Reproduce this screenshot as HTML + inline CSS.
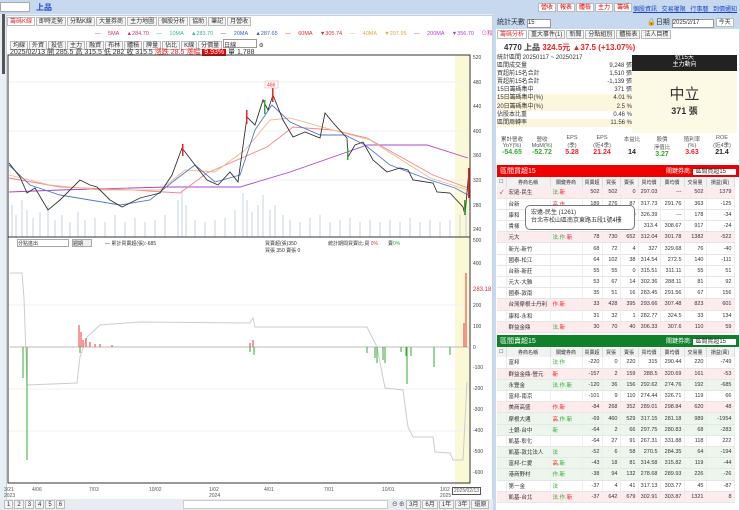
<!DOCTYPE html>
<html><head><meta charset="utf-8"><style>
*{margin:0;padding:0;box-sizing:border-box}
body{width:740px;height:510px;overflow:hidden;background:#fff;font-family:"Liberation Sans","Noto Sans CJK TC",sans-serif;font-size:7px;color:#333;position:relative}
.a{position:absolute}
.btn{display:inline-block;border:1px solid #bbb;background:#f4f4f4;padding:0 2px;height:9px;line-height:8px;margin-right:1px;font-size:6px}
table{border-collapse:collapse;width:100%;table-layout:fixed}
td{font-size:5.5px;height:11.2px;border-bottom:1px solid #e6e6e6;border-right:1px solid #eee;padding:0 2px;text-align:right;white-space:nowrap;overflow:hidden}
td:nth-child(2),td:nth-child(3){text-align:left}
tr.p td{background:#fdebee}tr.g td{background:#ecf6ec}
th{font-size:5px;font-weight:normal;background:#f2f2f2;border-right:1px solid #ddd;height:10px;white-space:nowrap;overflow:hidden}
</style></head><body>
<div class="a" style="left:0;top:0;width:740px;height:14px;background:#c7d9ef"></div>
<div class="a" style="left:0;top:2px;width:30px;height:10px;background:#fff;border:1px solid #aaa"></div>
<div class="a" style="left:36px;top:2px;color:#1a47c8;font-size:8px;font-weight:bold">上品</div>
<div class="a" style="left:538px;top:3px;font-size:6px">
<span class="btn" style="color:#d00;background:#fff">營收</span><span class="btn" style="color:#d00;background:#fff">報表</span><span class="btn" style="color:#d00;background:#fff">體檢</span><span class="btn" style="color:#d00;background:#fff">主力</span><span class="btn" style="color:#d00;background:#fff">籌碼</span></div>
<div class="a" style="left:633px;top:4px;font-size:6px;color:#1a47c8;text-decoration:underline;word-spacing:3px">個股資訊 交易權限 行事曆 到價通知</div>
<div class="a" style="left:0;top:14px;width:493px;height:496px;background:#e8eef6"></div>
<div class="a" style="left:2px;top:14px;width:3px;height:60px;background:#555"></div>
<div class="a" style="left:6px;top:15px;width:487px;height:495px;background:#fff;border:1px solid #c8d0dc"></div>
<div class="a" style="left:7px;top:17px;font-size:6px">
<span class="btn" style="color:#d33;background:#fff">籌碼K線</span><span class="btn">即時走勢</span><span class="btn">分點K線</span><span class="btn">大量券商</span><span class="btn">主力地圖</span><span class="btn">個股分析</span><span class="btn">協助</span><span class="btn">筆記</span><span class="btn">月營收</span></div>
<div class="a" style="left:95px;top:29px;font-size:5.5px;word-spacing:6px"><span style="color:#c36">— 5MA ▲284.70</span> <span style="color:#3b8">— 10MA ▲283.70</span> <span style="color:#36c">— 20MA ▲287.65</span> <span style="color:#c33">— 60MA ▼305.74</span> <span style="color:#da4">— 40MA ▼297.95</span> <span style="color:#a4c">— 200MA ▼356.70</span> <span style="color:#c4a">⊙和訂市區為最偏低</span></div>
<div class="a" style="left:10px;top:39px;font-size:5.5px"><span class="btn">均線</span><span class="btn">外資</span><span class="btn">投信</span><span class="btn">主力</span><span class="btn">融資</span><span class="btn">布林</span><span class="btn">體積</span><span class="btn">牌量</span><span class="btn">佔比</span><span class="btn">K線</span><span class="btn">分價量</span><span style="display:inline-block;width:34px;height:9px;border:1px solid #999;background:#fff;font-size:6px">日線</span> ⚙</div>
<div class="a" style="left:10px;top:47px;font-size:7px">2025/02/13 開 285.5 高 315.5 低 282 收 315.5 <span style="color:#e22">漲跌 28.5 漲幅 <span style="background:#e00;color:#fff;padding:0 2px">9.93%</span></span> 量 1,788</div>
<div class="a" style="left:455px;top:55px;width:15px;height:430px;background:#fbf8d8"></div>
<svg class="a" style="left:0;top:0" width="493" height="500">
<g stroke="#f0f0f0"><path d="M8 82H470M8 131H470M8 180H470M8 305H470M8 389H470M8 431H470"/></g>
<g stroke="#c5d3e3"><path d="M12 237V205M16 237V215M22 237V200M27 237V210M33 237V218M40 237V212M48 237V205M55 237V220M62 237V215M70 237V222M78 237V212M85 237V220M95 237V218M105 237V222M115 237V215M125 237V222M135 237V218M145 237V222M155 237V220M165 237V215M178 237V200M182 237V190M186 237V205M195 237V220M205 237V222M215 237V220M225 237V218M235 237V210M243 237V193M247 237V200M252 237V212M258 237V205M263 237V195M270 237V210M275 237V205M283 237V215M290 237V220M300 237V222M310 237V218M320 237V215M330 237V222M340 237V220M350 237V218M360 237V222M370 237V220M380 237V222M390 237V220M400 237V222M410 237V218M420 237V222M430 237V220M440 237V222M450 237V220M460 237V215M466 237V210"/></g>
<g fill="none" stroke-width="0.9">
<polyline stroke="#a4c" points="9,192 60,190 167,187 240,187 290,172 333,157 367,145 427,145 468,158"/>
<polyline stroke="#e88" points="9,178 60,187 133,190 180,193 207,173 267,147 293,127 333,130 367,138 433,175 468,188"/>
<polyline stroke="#eb8" points="9,175 50,185 100,190 160,190 185,170 215,172 245,150 270,120 290,118 340,132 370,140 430,178 468,190"/>
<polyline stroke="#57c" points="9,165 30,185 60,195 90,200 120,205 150,200 175,180 195,165 215,182 240,175 255,130 272,105 290,122 320,135 345,135 365,145 390,165 430,180 455,188 468,195"/>
<polyline stroke="#333" points="9,163 20,177 27,193 35,188 48,210 60,200 80,180 90,185 97,187 110,200 122,207 140,198 160,193 172,175 182,148 195,165 207,180 218,185 230,172 238,182 247,117 255,125 263,100 268,110 273,95 283,120 293,137 305,132 320,138 325,113 335,125 347,138 348,157 355,145 363,142 373,160 387,172 400,168 408,170 413,180 433,183 437,192 450,193 463,207 465,215 469,170"/>
</g>
<g fill="#e22"><rect x="272" y="88" width="1.5" height="14"/><rect x="246" y="110" width="1.5" height="14"/><rect x="182" y="144" width="1.5" height="12"/><rect x="468" y="168" width="1.5" height="30"/></g>
<g fill="#3a3"><rect x="264" y="100" width="1.5" height="14"/><rect x="347" y="148" width="1.5" height="12"/><rect x="464" y="200" width="1.5" height="14"/></g>
<rect x="265" y="81" width="13" height="7" fill="#fff" stroke="#e99" stroke-width="0.5"/>
<text x="267" y="86.5" font-size="5" fill="#e22">466</text>
<line x1="8" y1="237" x2="470" y2="237" stroke="#333"/>
<rect x="8" y="55" width="462" height="428" fill="none" stroke="#333"/>
<g font-size="5" fill="#444"><text x="473" y="59">520</text><text x="473" y="84">480</text><text x="473" y="108">440</text><text x="473" y="133">400</text><text x="473" y="157">360</text><text x="473" y="182">320</text><text x="473" y="207">280</text><text x="473" y="231">240</text>
<text x="473" y="242">500</text><text x="473" y="265">400</text><text x="473" y="307">200</text><text x="473" y="328">100</text><text x="473" y="349">0</text><text x="473" y="369">-100</text><text x="473" y="390">-200</text><text x="473" y="411">-300</text><text x="473" y="432">-400</text><text x="473" y="453">-500</text><text x="473" y="474">-600</text></g>
<text x="473" y="291" font-size="6" fill="#c33">283.18</text>
<line x1="10" y1="347" x2="470" y2="347" stroke="#bbb"/>
<polyline fill="none" stroke="#ccc" points="10,273 22,273 24,298 27,385 77,383 80,357 87,337 100,325 140,322 250,323 253,318 255,327 367,327 377,347 385,388 403,390 408,427 413,437 433,437 435,452 450,453 453,460 463,460 467,382"/>
<g stroke="#e33"><path d="M79 347V325M81 347V332M83 347V340M86 347V338M90 347V342M95 347V344M100 347V344M112 347V345M250 347V343M253 347V340M466 347V273M464 347V323"/></g>
<g stroke="#3a3"><path d="M27 347V460M23 347V378M80 347V353M250 347V352M254 347V355M367 347V353M375 347V358M377 347V363M383 347V360M385 347V363M401 347V352M406 347V356M407 347V384M411 347V356M434 347V367M450 347V355"/></g>
</svg>
<div class="a" style="left:17px;top:239px;width:52px;height:8px;border:1px solid #aaa;font-size:5px">分點進出</div>
<div class="a" style="left:72px;top:239px;width:20px;height:8px;border:1px solid #aaa;background:#eee;font-size:5px">週期</div>
<div class="a" style="left:105px;top:240px;font-size:5px">— 累計買賣超(張):-685</div>
<div class="a" style="left:265px;top:240px;font-size:5px">買賣超(張)350<br>買張 350 賣張 0</div>
<div class="a" style="left:328px;top:240px;font-size:5px">統計期間買賣比:買 <span style="color:#e33">0%</span>　　賣<span style="color:#3a3">0%</span></div>
<div class="a" style="left:4px;top:487px;font-size:5px;width:490px;color:#555">
<span class="a" style="left:0">3/21<br>2023</span><span class="a" style="left:28px">4/06</span><span class="a" style="left:85px">7/03</span><span class="a" style="left:145px">10/02</span><span class="a" style="left:205px">1/02<br>2024</span><span class="a" style="left:260px">4/01</span><span class="a" style="left:320px">7/01</span><span class="a" style="left:378px">10/01</span><span class="a" style="left:436px">1/02<br>2025</span><span class="a" style="left:448px;border:1px solid #555;background:#fff;padding:0 1px">2025/02/13</span></div>
<div class="a" style="left:0;top:499px;width:493px;height:11px;background:#e8ecf2"></div>
<div class="a" style="left:4px;top:500px;font-size:5.5px"><span class="btn">1</span><span class="btn">2</span><span class="btn">3</span><span class="btn">4</span><span class="btn">5</span><span class="btn">6</span></div>
<div class="a" style="left:183px;top:500px;width:205px;height:9px;background:#fff;border:1px solid #ccc"></div>
<div class="a" style="left:392px;top:500px;font-size:5.5px">⊖ ⊕ <span class="btn">3月</span><span class="btn">6月</span><span class="btn">1年</span><span class="btn">3年</span><span class="btn">還原</span></div>
<div class="a" style="left:493px;top:14px;width:247px;height:496px;background:#c7d9ef"></div>
<div class="a" style="left:497px;top:17px;font-size:7px;color:#234">統計天數 <span style="display:inline-block;width:24px;height:9px;background:#fff;border:1px solid #999;font-size:6px">15</span></div>
<div class="a" style="left:647px;top:17px;font-size:7px">🔒日期 <span style="display:inline-block;width:42px;height:9px;background:#fff;border:1px solid #999;font-size:6px">2025/2/17</span> <span class="btn" style="background:#fff">今天</span></div>
<div class="a" style="left:496px;top:29px;width:243px;height:481px;background:#fff"></div>
<div class="a" style="left:497px;top:30px;font-size:6px"><span class="btn" style="color:#d33;background:#fff">籌碼分析</span><span class="btn">重大事件(1)</span><span class="btn">新聞</span><span class="btn">分點組別</span><span class="btn">體檢表</span><span class="btn">法人目標</span></div>
<div class="a" style="left:504px;top:42px;font-size:8px;font-weight:bold">4770 上品 <span style="color:#e22">324.5元 ▲37.5 (+13.07%)</span></div>
<div class="a" style="left:497px;top:54px;width:135px;font-size:6px;line-height:8.1px">
<div>統計區間 20250117 ~ 20250217</div>
<div>區間成交量<span style="float:right">9,248 張</span></div>
<div>買超前15名合計<span style="float:right">1,510 張</span></div>
<div>賣超前15名合計<span style="float:right">-1,139 張</span></div>
<div>15日籌碼集中<span style="float:right">371 張</span></div>
<div style="background:#fcf6dc">15日籌碼集中(%)<span style="float:right">4.01 %</span></div>
<div style="background:#fcf6dc">20日籌碼集中(%)<span style="float:right">2.5 %</span></div>
<div>佔股本比重<span style="float:right">0.46 %</span></div>
<div style="background:#fcf6dc">區間周轉率<span style="float:right">11.56 %</span></div></div>
<div class="a" style="left:632px;top:55px;width:105px;height:16px;background:#222;color:#fff;text-align:center;font-size:6px;line-height:7px">近15天<br>主力動向</div>
<div class="a" style="left:632px;top:71px;width:105px;height:62px;background:#fcf9e4;text-align:center;padding-top:12px"><div style="font-size:15px;color:#333">中立</div><div style="font-size:9px;font-weight:bold">371 張</div></div>
<div class="a" style="left:497px;top:135px;width:240px;font-size:5.5px;display:flex;text-align:center;color:#555">
<div style="flex:1">累計營收<br>YoY(%)<br><b style="color:#3a3;font-size:7px">-54.65</b></div><div style="flex:1">營收<br>MoM(%)<br><b style="color:#3a3;font-size:7px">-52.72</b></div><div style="flex:1">EPS<br>(季)<br><b style="color:#e22;font-size:7px">5.28</b></div><div style="flex:1">EPS<br>(近4季)<br><b style="color:#e22;font-size:7px">21.24</b></div><div style="flex:1">本益比<br><br><b style="color:#222;font-size:7px">14</b></div><div style="flex:1">股價<br>淨值比<br><b style="color:#3a3;font-size:7px">3.27</b></div><div style="flex:1">殖利率<br>(%)<br><b style="color:#e22;font-size:7px">3.63</b></div><div style="flex:1">ROE<br>(近4季)<br><b style="color:#222;font-size:7px">21.4</b></div></div>
<div class="a" style="left:497px;top:165px;width:242px;height:12px;background:#e00;color:#fff;font-size:7px;padding:1px 3px">區間買超15<span style="float:right;font-size:6px">關鍵券商: <span style="background:#fff;color:#333;padding:0 10px 0 2px">區間買超15</span></span></div>
<div class="a" style="left:497px;top:177px;width:237px">
<table><colgroup><col style="width:9px"><col style="width:44px"><col style="width:32px"><col style="width:20px"><col style="width:18px"><col style="width:18px"><col style="width:22px"><col style="width:24px"><col style="width:22px"><col style="width:28px"></colgroup>
<tr><th>☐</th><th>券商名稱</th><th>關鍵券商</th><th>買賣超</th><th>買張</th><th>賣張</th><th>買均價</th><th>賣均價</th><th>交易量</th><th>損益(萬)</th></tr>
<tr class="p"><td>✓</td><td>宏遠-民生</td><td style="color:#3a3">法.<span style="color:#e22">新</span></td><td>502</td><td>502</td><td>0</td><td>297.03</td><td>---</td><td>502</td><td>1379</td></tr>
<tr><td></td><td>台新</td><td style="color:#e22">高.市</td><td>189</td><td>276</td><td>87</td><td>317.73</td><td>291.76</td><td>363</td><td>-125</td></tr>
<tr><td></td><td>康和</td><td></td><td>178</td><td>178</td><td>0</td><td>326.39</td><td>---</td><td>178</td><td>-34</td></tr>
<tr><td></td><td>貴樣</td><td></td><td>87</td><td>502</td><td>87</td><td>313.4</td><td>308.67</td><td>917</td><td>-24</td></tr>
<tr class="p"><td></td><td>元大</td><td style="color:#3a3">法.作.<span style="color:#e22">新</span></td><td>78</td><td>730</td><td>652</td><td>312.04</td><td>301.78</td><td>1382</td><td>-522</td></tr>
<tr><td></td><td>新光-新竹</td><td></td><td>68</td><td>72</td><td>4</td><td>327</td><td>329.68</td><td>76</td><td>-40</td></tr>
<tr><td></td><td>國泰-松江</td><td></td><td>64</td><td>102</td><td>38</td><td>314.54</td><td>272.5</td><td>140</td><td>-111</td></tr>
<tr><td></td><td>台新-新莊</td><td></td><td>55</td><td>55</td><td>0</td><td>315.51</td><td>311.11</td><td>55</td><td>51</td></tr>
<tr><td></td><td>元大-大雅</td><td></td><td>53</td><td>67</td><td>14</td><td>302.36</td><td>288.11</td><td>81</td><td>92</td></tr>
<tr><td></td><td>國泰-敦南</td><td></td><td>35</td><td>51</td><td>16</td><td>283.45</td><td>291.56</td><td>67</td><td>156</td></tr>
<tr class="p"><td></td><td>台灣摩根士丹利</td><td style="color:#e22">作.新</td><td>33</td><td>428</td><td>395</td><td>293.66</td><td>307.48</td><td>823</td><td>601</td></tr>
<tr><td></td><td>康和-永和</td><td></td><td>31</td><td>32</td><td>1</td><td>282.77</td><td>324.5</td><td>33</td><td>134</td></tr>
<tr class="p"><td></td><td>群益金鼎</td><td style="color:#3a3">法.<span style="color:#e22">新</span></td><td>30</td><td>70</td><td>40</td><td>306.33</td><td>307.6</td><td>110</td><td>59</td></tr></table></div>
<div class="a" style="left:525px;top:205px;width:110px;height:25px;background:#fff;border:1px solid #777;border-radius:5px;font-size:6px;padding:3px 5px;line-height:8px">宏遠-民生 (1261)<br>台北市松山區南京東路五段1號4樓</div>
<div class="a" style="left:497px;top:335px;width:242px;height:12px;background:#10802a;color:#fff;font-size:7px;padding:1px 3px">區間賣超15<span style="float:right;font-size:6px">關鍵券商: <span style="background:#fff;color:#333;padding:0 10px 0 2px">區間賣超15</span></span></div>
<div class="a" style="left:497px;top:347px;width:237px">
<table><colgroup><col style="width:9px"><col style="width:44px"><col style="width:32px"><col style="width:20px"><col style="width:18px"><col style="width:18px"><col style="width:22px"><col style="width:24px"><col style="width:22px"><col style="width:28px"></colgroup>
<tr><th>☐</th><th>券商名稱</th><th>關鍵券商</th><th>買賣超</th><th>買張</th><th>賣張</th><th>買均價</th><th>賣均價</th><th>交易量</th><th>損益(萬)</th></tr>
<tr><td></td><td>富邦</td><td style="color:#3a3">法.作</td><td>-220</td><td>0</td><td>220</td><td>315</td><td>290.44</td><td>220</td><td>-749</td></tr>
<tr class="p"><td></td><td>群益金鼎-營元</td><td style="color:#e22">新</td><td>-157</td><td>2</td><td>159</td><td>288.5</td><td>320.69</td><td>161</td><td>-53</td></tr>
<tr class="g"><td></td><td>永豐金</td><td style="color:#3a3">法.作.新</td><td>-120</td><td>36</td><td>156</td><td>292.62</td><td>274.76</td><td>192</td><td>-685</td></tr>
<tr><td></td><td>富邦-南京</td><td></td><td>-101</td><td>9</td><td>110</td><td>274.44</td><td>326.71</td><td>119</td><td>66</td></tr>
<tr class="p"><td></td><td>美商高盛</td><td style="color:#e22">作.新</td><td>-84</td><td>268</td><td>352</td><td>289.01</td><td>298.84</td><td>620</td><td>48</td></tr>
<tr class="g"><td></td><td>摩根大通</td><td style="color:#3a3"><span style="color:#e22">高</span>.作.新</td><td>-69</td><td>460</td><td>529</td><td>317.15</td><td>281.18</td><td>989</td><td>-1954</td></tr>
<tr class="g"><td></td><td>土銀-台中</td><td style="color:#3a3">新</td><td>-64</td><td>2</td><td>66</td><td>297.75</td><td>280.83</td><td>68</td><td>-283</td></tr>
<tr><td></td><td>凱基-彰化</td><td></td><td>-64</td><td>27</td><td>91</td><td>267.31</td><td>331.88</td><td>118</td><td>222</td></tr>
<tr class="g"><td></td><td>凱基-敦北法人</td><td style="color:#3a3">法</td><td>-52</td><td>6</td><td>58</td><td>270.5</td><td>284.35</td><td>64</td><td>-194</td></tr>
<tr class="g"><td></td><td>富邦-仁愛</td><td style="color:#3a3"><span style="color:#e22">高</span>.新</td><td>-43</td><td>18</td><td>81</td><td>314.58</td><td>315.82</td><td>119</td><td>-44</td></tr>
<tr class="g"><td></td><td>港商野村</td><td style="color:#3a3">作.新</td><td>-38</td><td>94</td><td>132</td><td>278.68</td><td>289.93</td><td>226</td><td>-26</td></tr>
<tr><td></td><td>第一金</td><td style="color:#3a3">法</td><td>-37</td><td>4</td><td>41</td><td>317.13</td><td>303.77</td><td>45</td><td>-87</td></tr>
<tr class="p"><td></td><td>凱基-台北</td><td style="color:#3a3">法.作.<span style="color:#e22">新</span></td><td>-37</td><td>642</td><td>679</td><td>302.91</td><td>303.87</td><td>1321</td><td>8</td></tr></table></div>
</body></html>
